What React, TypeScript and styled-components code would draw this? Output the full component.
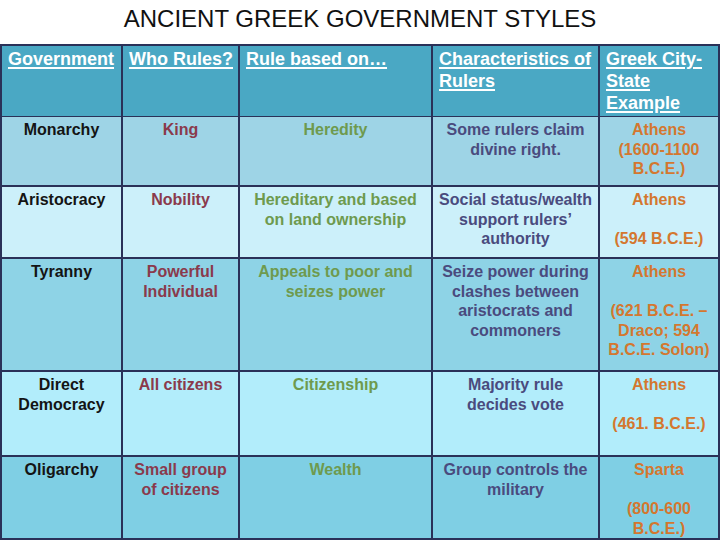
import styled, { createGlobalStyle } from "styled-components";

const GlobalStyle = createGlobalStyle`
  html, body {
    margin: 0;
    padding: 0;
    background: #ffffff;
  }
  body {
    font-family: "Liberation Sans", Arial, sans-serif;
  }
`;

const Page = styled.div`
  width: 720px;
  height: 540px;
  overflow: hidden;
`;

const Title = styled.h1`
  margin: 0;
  height: 44px;
  display: flex;
  align-items: center;
  justify-content: center;
  font-size: 24px;
  font-weight: normal;
  color: #111111;
  padding-bottom: 6px;
  box-sizing: border-box;
`;

const Table = styled.div`
  display: flex;
  flex-direction: column;
  gap: 2px;
  padding: 2px;
  background: #2a3158;
  width: 720px;
  box-sizing: border-box;
`;

const Row = styled.div<{ $bg: string; $h: number }>`
  display: grid;
  grid-template-columns: 119px 115px 191px 165px 118px;
  gap: 2px;
  height: ${(p) => p.$h}px;
  & > div {
    background: ${(p) => p.$bg};
  }
`;

const HeadCell = styled.div`
  padding: 2px 2px 2px 6px;
  color: #ffffff;
  font-size: 18px;
  font-weight: bold;
  line-height: 22px;
  text-decoration: underline;
  text-decoration-thickness: 1.5px;
  text-underline-offset: 2px;
`;

const Cell = styled.div<{ $color: string }>`
  padding: 3px 2px 0;
  text-align: center;
  color: ${(p) => p.$color};
  font-size: 16px;
  font-weight: bold;
  line-height: 19.5px;
  white-space: nowrap;
`;

const colors = ["#141414", "#8a3a4c", "#6e9a4e", "#4a4b7e", "#d4772f"];

type RowData = { bg: string; h: number; cells: string[][] };

const rows: RowData[] = [
  {
    bg: "#9ed4e6",
    h: 68,
    cells: [
      ["Monarchy"],
      ["King"],
      ["Heredity"],
      ["Some rulers claim", "divine right."],
      ["Athens", "(1600-1100", "B.C.E.)"],
    ],
  },
  {
    bg: "#ccf0fa",
    h: 70,
    cells: [
      ["Aristocracy"],
      ["Nobility"],
      ["Hereditary and based", "on land ownership"],
      ["Social status/wealth", "support rulers’", "authority"],
      ["Athens", "", "(594 B.C.E.)"],
    ],
  },
  {
    bg: "#8ed3e6",
    h: 111,
    cells: [
      ["Tyranny"],
      ["Powerful", "Individual"],
      ["Appeals to poor and", "seizes power"],
      ["Seize power during", "clashes between", "aristocrats and", "commoners"],
      ["Athens", "", "(621 B.C.E. –", "Draco; 594", "B.C.E. Solon)"],
    ],
  },
  {
    bg: "#b2edfb",
    h: 83,
    cells: [
      ["Direct", "Democracy"],
      ["All citizens"],
      ["Citizenship"],
      ["Majority rule", "decides vote"],
      ["Athens", "", "(461. B.C.E.)"],
    ],
  },
  {
    bg: "#7fcfe4",
    h: 81,
    cells: [
      ["Oligarchy"],
      ["Small group", "of citizens"],
      ["Wealth"],
      ["Group controls the", "military"],
      ["Sparta", "", "(800-600", "B.C.E.)"],
    ],
  },
];

const headers = [
  "Government",
  "Who Rules?",
  "Rule based on…",
  "Characteristics of Rulers",
  "Greek City-State Example",
];

export default function App() {
  return (
    <Page>
      <GlobalStyle />
      <Title>ANCIENT GREEK GOVERNMENT STYLES</Title>
      <Table>
        <Row $bg="#4aa8c4" $h={69}>
          {headers.map((h) => (
            <HeadCell key={h}>{h}</HeadCell>
          ))}
        </Row>
        {rows.map((r) => (
          <Row key={r.cells[0][0]} $bg={r.bg} $h={r.h}>
            {r.cells.map((lines, i) => (
              <Cell key={i} $color={colors[i]}>
                {lines.map((l, j) => (
                  <div key={j}>{l || "\u00a0"}</div>
                ))}
              </Cell>
            ))}
          </Row>
        ))}
      </Table>
    </Page>
  );
}
